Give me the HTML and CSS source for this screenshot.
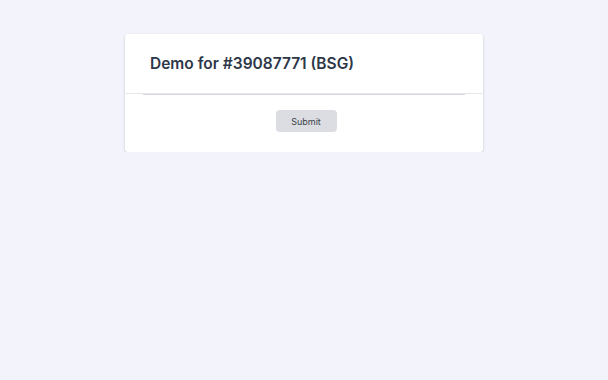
FILE: index.html
```html
<!DOCTYPE html>
<html lang="en">
<head>
    <meta charset="UTF-8">
    <meta name="viewport" content="width=device-width, initial-scale=1.0">
    <title>Demo for #39087771 (BSG)</title>
    <link rel="stylesheet" href="styles.css">
</head>
<body>
    <div class="card">
        <div class="card-header">
            <h1>Demo for #39087771 (BSG)</h1>
        </div>
        <div class="card-body">
            <div class="divider"></div>
            <form class="form" onsubmit="return false;">
                <button class="button" type="submit">Submit</button>
            </form>
        </div>
    </div>
</body>
</html>
```

FILE: styles.css
```css
body {
    margin: 0;
    font-family: Inter, "Noto Sans", sans-serif;
    background-color: #f3f3fc;
    color: #2d3748;
}
.card {
    width: 358px;
    margin: 34px 0 0 125px;
    background-color: #fff;
    border-radius: 3px;
    box-shadow: 0 1px 3px rgba(0, 0, 0, 0.12), 0 1px 2px rgba(0, 0, 0, 0.08);
}
.card-header {
    height: 59px;
    padding: 0 25px;
    display: flex;
    align-items: center;
    border-bottom: 1px solid #e7e7ee;
}
h1 {
    margin: 0;
    font-size: 15.5px;
    font-weight: 600;
    color: #2d3748;
}
.card-body {
    padding: 0 18px 20px;
}
.divider {
    height: 1px;
    background-color: #d6d6dc;
}
.form {
    display: flex;
    justify-content: center;
    padding: 15px 0 0 4px;
}
.button {
    width: 61px;
    height: 22px;
    padding: 0;
    font-family: Inter, "Noto Sans", sans-serif;
    font-size: 9px;
    color: #3a3f4a;
    background-color: #dcdde2;
    border: none;
    border-radius: 4px;
    cursor: pointer;
}
```
